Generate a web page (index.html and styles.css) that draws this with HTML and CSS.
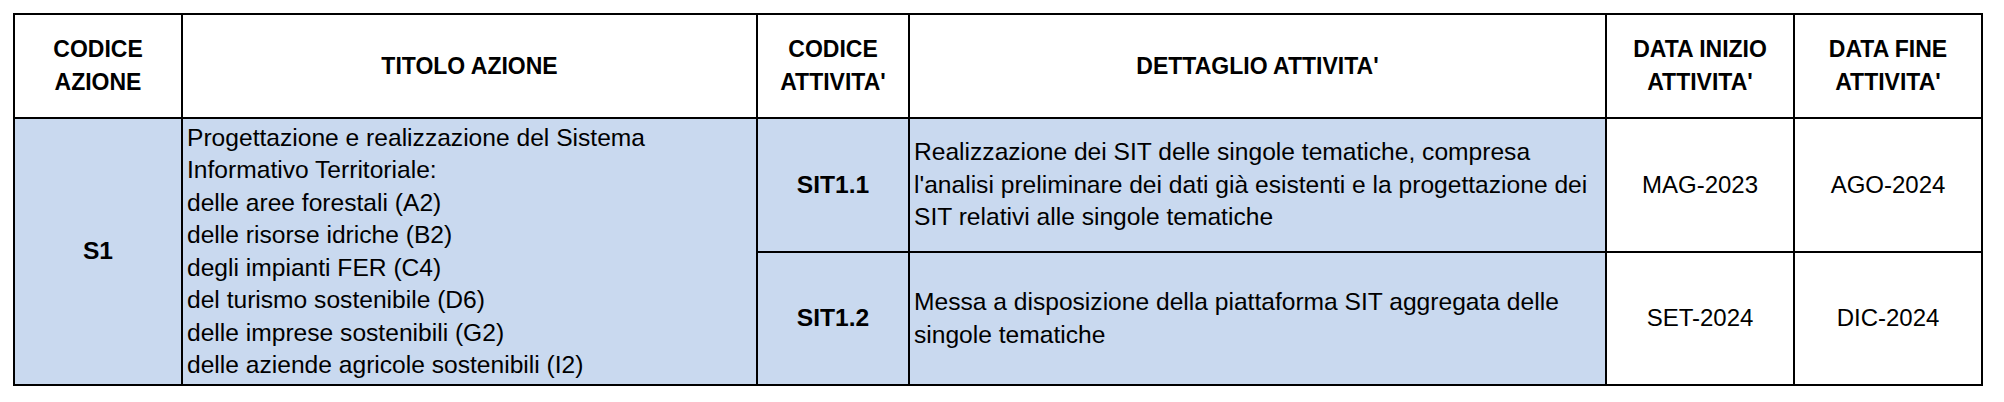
FILE: index.html
```html
<!DOCTYPE html>
<html lang="it">
<head>
<meta charset="utf-8">
<title>Azioni SIT</title>
<link rel="stylesheet" href="styles.css">
</head>
<body>
<table class="grid">
  <colgroup>
    <col class="c-code">
    <col class="c-title">
    <col class="c-act">
    <col class="c-detail">
    <col class="c-start">
    <col class="c-end">
  </colgroup>
  <thead>
    <tr class="head">
      <th>CODICE<br>AZIONE</th>
      <th>TITOLO AZIONE</th>
      <th>CODICE<br>ATTIVITA'</th>
      <th>DETTAGLIO ATTIVITA'</th>
      <th>DATA INIZIO<br>ATTIVITA'</th>
      <th>DATA FINE<br>ATTIVITA'</th>
    </tr>
  </thead>
  <tbody>
    <tr class="r1">
      <td class="blue code" rowspan="2">S1</td>
      <td class="blue text" rowspan="2">Progettazione e realizzazione del Sistema<br>Informativo Territoriale:<br>delle aree forestali (A2)<br>delle risorse idriche (B2)<br>degli impianti FER (C4)<br>del turismo sostenibile (D6)<br>delle imprese sostenibili (G2)<br>delle aziende agricole sostenibili (I2)</td>
      <td class="blue code">SIT1.1</td>
      <td class="blue text">Realizzazione dei SIT delle singole tematiche, compresa<br>l'analisi preliminare dei dati già esistenti e la progettazione dei<br>SIT relativi alle singole tematiche</td>
      <td class="date">MAG-2023</td>
      <td class="date">AGO-2024</td>
    </tr>
    <tr class="r2">
      <td class="blue code">SIT1.2</td>
      <td class="blue text">Messa a disposizione della piattaforma SIT aggregata delle<br>singole tematiche</td>
      <td class="date">SET-2024</td>
      <td class="date">DIC-2024</td>
    </tr>
  </tbody>
</table>
</body>
</html>
```
FILE: styles.css
```css
html, body {
  margin: 0;
  padding: 0;
  background: #ffffff;
}

body {
  padding: 13px 0 0 13px;
  font-family: "Liberation Sans", Arial, sans-serif;
  color: #000000;
}

.grid {
  border-collapse: collapse;
  table-layout: fixed;
  width: 1968px;
}

.c-code { width: 168px; }
.c-title { width: 575px; }
.c-act { width: 152px; }
.c-detail { width: 697px; }
.c-start { width: 188px; }
.c-end { width: 188px; }

.grid th,
.grid td {
  border: 2px solid #000000;
  padding: 0 4px;
}

.head {
  height: 104px;
}

.head th {
  font-size: 23px;
  font-weight: bold;
  line-height: 33px;
  text-align: center;
  vertical-align: middle;
}

.r1 { height: 134px; }
.r2 { height: 133px; }

.grid td {
  font-size: 24.6px;
  line-height: 32.5px;
  vertical-align: middle;
}

.blue {
  background: #c9d9ef;
}

.code {
  text-align: center;
  font-weight: bold;
  font-size: 24px;
}

.text {
  text-align: left;
  white-space: nowrap;
}

.grid td.date {
  text-align: center;
  background: #ffffff;
  font-size: 24px;
}
```
